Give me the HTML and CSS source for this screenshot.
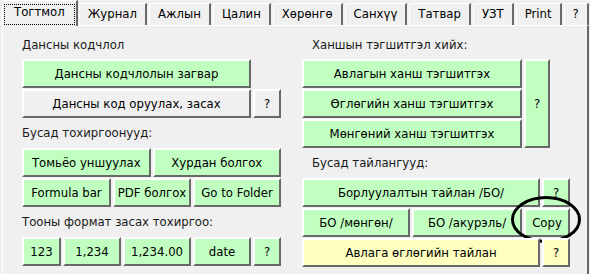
FILE: index.html
```html
<!DOCTYPE html>
<html lang="mn">
<head>
  <meta charset="UTF-8" />
  <title>Тогтмол</title>
  <link rel="stylesheet" href="styles.css">
</head>
<body>
  <div class="tabs">
    <div class="tab active"><span class="focus">Тогтмол</span></div>
    <div class="tab">Журнал</div>
    <div class="tab">Ажлын</div>
    <div class="tab">Цалин</div>
    <div class="tab">Хөрөнгө</div>
    <div class="tab">Санхүү</div>
    <div class="tab">Татвар</div>
    <div class="tab">УЗТ</div>
    <div class="tab">Print</div>
    <div class="tab">?</div>
  </div>

  <div class="panel">
    <div class="col col-left">
      <div class="caption">Дансны кодчлол</div>
      <div class="row">
        <button class="btn w229">Дансны кодчлолын загвар</button>
      </div>
      <div class="row">
        <button class="btn gray w229">Дансны код оруулах, засах</button>
        <button class="btn gray w28">?</button>
      </div>

      <div class="caption">Бусад тохиргоонууд:</div>
      <div class="row">
        <button class="btn fill">Томьёо уншуулах</button>
        <button class="btn fill">Хурдан болгох</button>
      </div>
      <div class="row">
        <button class="btn w89">Formula bar</button>
        <button class="btn w78">PDF болгох</button>
        <button class="btn w88">Go to Folder</button>
      </div>

      <div class="caption">Тооны формат засах тохиргоо:</div>
      <div class="row">
        <button class="btn w39">123</button>
        <button class="btn w58">1,234</button>
        <button class="btn w68">1,234.00</button>
        <button class="btn w58">date</button>
        <button class="btn w28">?</button>
      </div>
    </div>

    <div class="col col-right">
      <div class="caption">Ханшын тэгшитгэл хийх:</div>
      <div class="rate-block">
        <div class="stack">
          <button class="btn">Авлагын ханш тэгшитгэх</button>
          <button class="btn">Өглөгийн ханш тэгшитгэх</button>
          <button class="btn">Мөнгөний ханш тэгшитгэх</button>
        </div>
        <button class="btn tall">?</button>
      </div>

      <div class="caption">Бусад тайлангууд:</div>
      <div class="row">
        <button class="btn w238">Борлуулалтын тайлан /БО/</button>
        <button class="btn w28">?</button>
      </div>
      <div class="row">
        <button class="btn w108">БО /мөнгөн/</button>
        <button class="btn w110">БО /акурэль/</button>
        <button class="btn w46">Copy</button>
        <svg class="mark" width="72" height="50" viewBox="0 0 72 50">
          <ellipse cx="36" cy="24.5" rx="33.5" ry="22" fill="none" stroke="#000" stroke-width="3"/>
        </svg>
      </div>
      <div class="row">
        <button class="btn yellow w238">Авлага өглөгийн тайлан</button>
        <button class="btn yellow w28">?</button>
      </div>
    </div>
  </div>
</body>
</html>
```

FILE: styles.css
```css
* {
  margin: 0;
  padding: 0;
  box-sizing: border-box;
}

body {
  width: 590px;
  height: 274px;
  overflow: hidden;
  background: #f0f0f0;
  font-family: "DejaVu Sans Condensed", "DejaVu Sans", sans-serif;
  font-stretch: condensed;
  font-size: 13px;
  color: #000;
}

/* tab strip */
.tabs {
  display: flex;
  align-items: flex-start;
  height: 25px;
  padding-left: 2px;
  position: relative;
  z-index: 1;
}

.tab {
  margin-top: 3px;
  margin-right: 2px;
  height: 22px;
  line-height: 20px;
  padding: 0 8px;
  border-top: 1px solid #fff;
  border-left: 1px solid #fff;
  border-right: 2px solid #696969;
  white-space: nowrap;
}

.tab.active {
  margin-top: 0;
  margin-right: 1px;
  height: 26px;
  padding: 3px 1px 1px;
  background: #f0f0f0;
}

.tab.active .focus {
  display: block;
  height: 21px;
  line-height: 13px;
  padding: 0 9px;
  border: 1px dotted #000;
}

/* page body */
.panel {
  display: flex;
  gap: 21px;
  height: 249px;
  margin: 0 1px 0 2px;
  padding: 11px 0 0 19px;
  border-top: 1px solid #fff;
  border-left: 1px solid #fff;
  border-right: 2px solid #696969;
}

.col {
  display: flex;
  flex-direction: column;
}

.col-left {
  width: 259px;
}

.col-right {
  width: 268px;
}

.caption {
  height: 16px;
  line-height: 16px;
  margin: 7px 0;
  color: #1a1a1a;
  white-space: nowrap;
}

.caption:first-child {
  margin: 0 0 6px;
}

.col-right .caption {
  padding-left: 10px;
}

.row {
  display: flex;
  gap: 2px;
  height: 29px;
  position: relative;
}

.row + .row {
  margin-top: 1px;
}

.btn {
  height: 29px;
  font: inherit;
  color: #000;
  background: #c0ffc0;
  border: 2px solid;
  border-color: #fff #696969 #696969 #fff;
  text-align: center;
  white-space: nowrap;
}

.btn.gray { background: #f0f0f0; }
.btn.yellow { background: #ffffc0; }
.btn.fill { flex: 1; }

.w28 { width: 28px; }
.w39 { width: 39px; }
.w46 { width: 46px; }
.w58 { width: 58px; }
.w68 { width: 68px; }
.w78 { width: 78px; }
.w88 { width: 88px; }
.w89 { width: 89px; }
.w108 { width: 108px; }
.w110 { width: 110px; }
.w229 { width: 229px; }
.w238 { width: 238px; }

.rate-block {
  display: flex;
  gap: 2px;
  width: 248px;
}

.stack {
  display: flex;
  flex-direction: column;
  gap: 1px;
  width: 220px;
}

.btn.tall {
  width: 26px;
  height: 89px;
}

/* hand-drawn circle round the Copy button */
.mark {
  position: absolute;
  left: 208px;
  top: -13px;
  pointer-events: none;
}
```
